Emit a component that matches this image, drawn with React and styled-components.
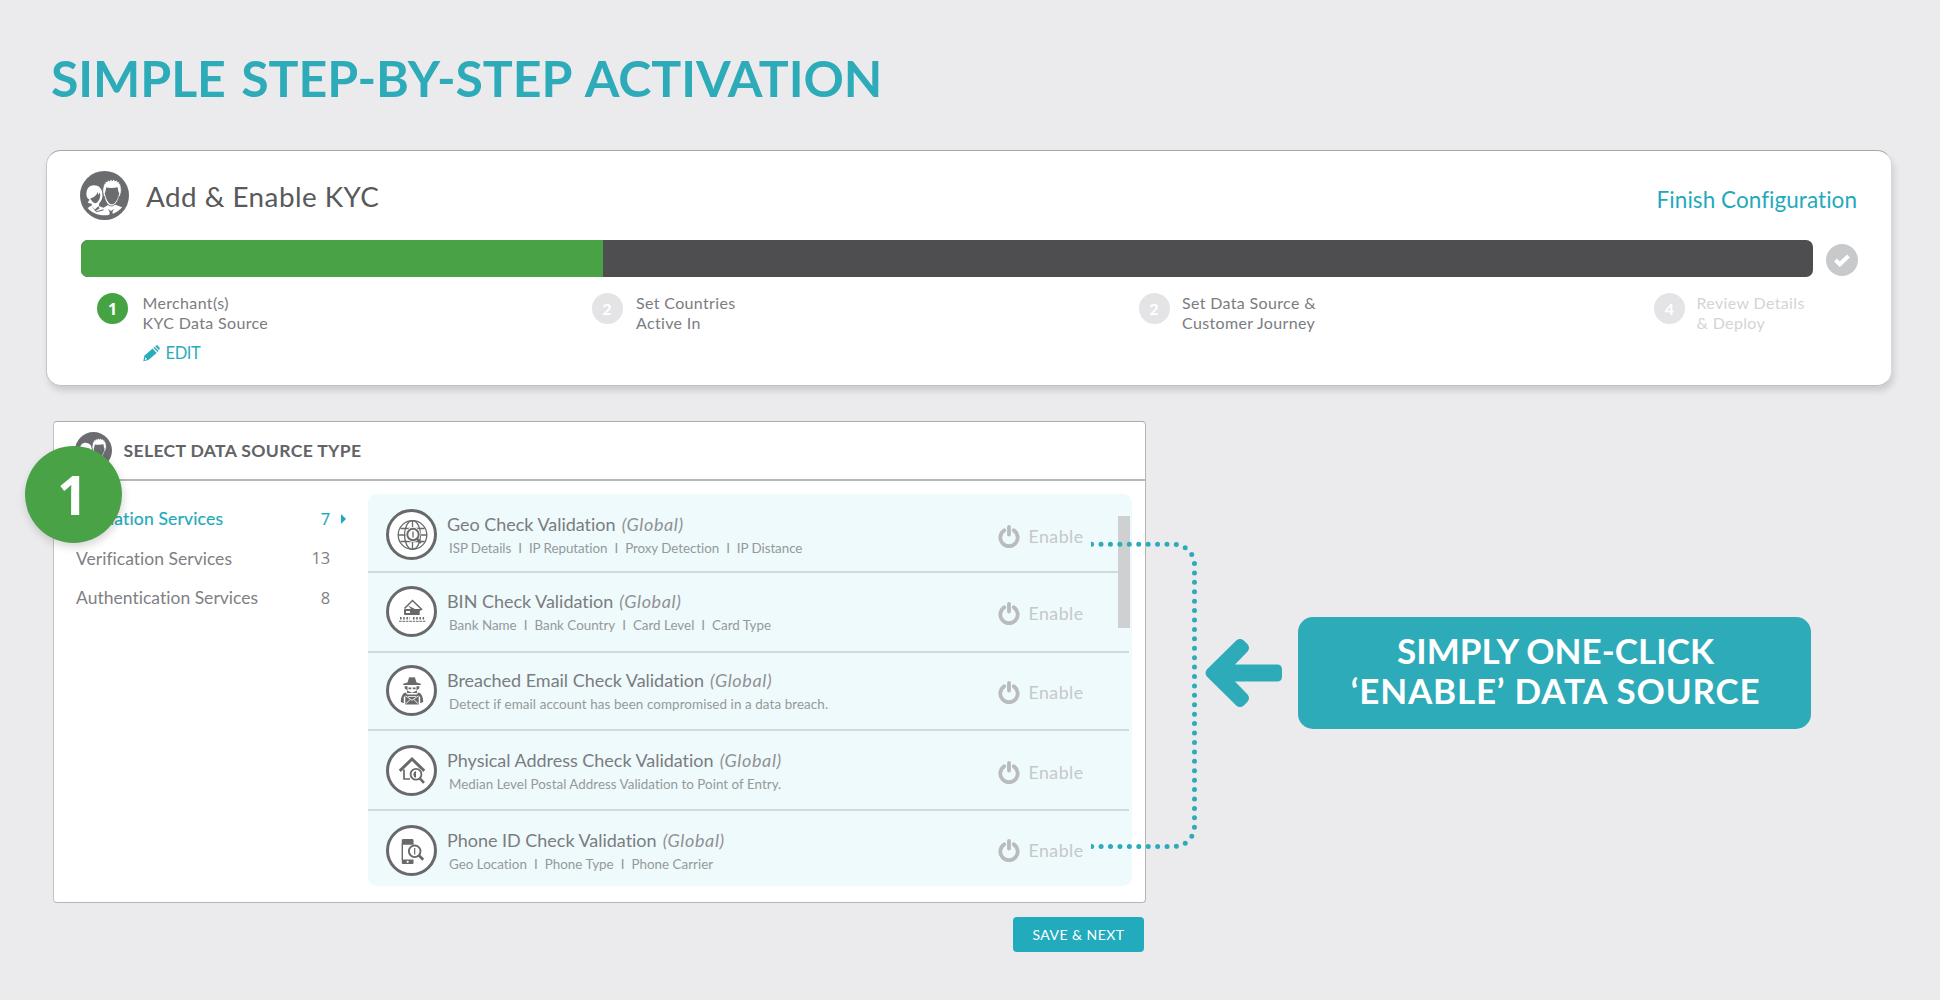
import React from "react";
import styled, { createGlobalStyle } from "styled-components";

const teal = "#2dabb9";
const green = "#49a246";
const iconGrey = "#68696b";

const GlobalStyle = createGlobalStyle`
  * { box-sizing: border-box; }
  body {
    margin: 0;
    background: #ebebed;
    font-family: Lato, "Liberation Sans", sans-serif;
    font-variant-ligatures: none;
  }
`;

const Page = styled.div`
  position: relative;
  width: 1940px;
  height: 1000px;
  padding: 48px 47px 0 46px;
  overflow: hidden;
`;

const Heading = styled.h1`
  margin: 0 0 42px 5px;
  font-size: 50px;
  line-height: 60px;
  font-weight: 700;
  letter-spacing: -0.08px;
  word-spacing: 3.5px;
  color: ${teal};
`;

/* ---------- progress card ---------- */

const ProgressCard = styled.section`
  width: 1846px;
  height: 236px;
  padding: 20px 33px 0;
  background: #fff;
  border: 1px solid;
  border-color: #a7a8aa #d8d8da #bfc0c2 #c6c6c8;
  border-radius: 15px;
  box-shadow: 2px 5px 6px rgba(0, 0, 0, 0.13);
`;

const ProgressHeader = styled.header`
  display: flex;
  align-items: center;
  height: 49px;
`;

const ProgressTitle = styled.h2`
  flex: 1;
  margin: 0 0 0 17px;
  padding-top: 3px;
  font-size: 27.8px;
  line-height: 34px;
  font-weight: 400;
  letter-spacing: 0.47px;
  color: #58595b;
`;

const FinishLink = styled.a`
  padding: 9px 1px 0 0;
  font-size: 22.5px;
  line-height: 28px;
  letter-spacing: 0.05px;
  color: #1faabb;
`;

const BarRow = styled.div`
  display: flex;
  align-items: center;
  gap: 13px;
  margin: 20px 0 0 0.5px;
`;

const Bar = styled.div`
  display: flex;
  width: 1734px;
  height: 37px;
  border-radius: 7px;
  overflow: hidden;
  background: #4e4e50;
`;

const BarFill = styled.div`
  width: 522px;
  background: ${green};
`;

const CheckCircle = styled.span`
  display: grid;
  place-items: center;
  width: 32px;
  height: 32px;
  margin-top: 2px;
  border-radius: 50%;
  background: #c8c9cb;
`;

const Steps = styled.div`
  display: grid;
  grid-template-columns: 494.5px 547px 515.5px auto;
  padding: 16px 0 0 17px;
`;

const Step = styled.div`
  display: flex;
  align-items: flex-start;
  gap: ${(p) => p.$gap}px;
  color: ${(p) => (p.$muted ? "#d3d4d6" : "#7b7c7f")};
`;

const StepNumber = styled.span`
  width: 31px;
  height: 31px;
  border-radius: 50%;
  text-align: center;
  font: 700 16px/32px ${(p) => (p.$active ? '"Open Sans"' : "Lato")}, sans-serif;
  color: #fff;
  background: ${(p) => (p.$active ? "#45a344" : "#e4e4e7")};
`;

const StepText = styled.div`
  font-size: 16px;
  line-height: 20px;
  letter-spacing: 0.35px;
  white-space: pre-line;
`;

const EditLink = styled.a`
  display: flex;
  align-items: center;
  gap: 6px;
  margin-top: 10px;
  font-size: 16.5px;
  letter-spacing: -0.4px;
  color: #2aabba;
`;

/* ---------- data source card ---------- */

const Main = styled.main`
  display: flex;
  align-items: flex-start;
  margin: 35px 0 0 7px;
`;

const Column = styled.div`
  display: flex;
  flex-direction: column;
  align-items: flex-end;
`;

const SourceCard = styled.section`
  width: 1093px;
  height: 482px;
  background: #fff;
  border: 1px solid;
  border-color: #a9aaac #b4b4b6 #b4b4b6 #c2c2c4;
  border-radius: 4px;
`;

const SourceHeader = styled.header`
  display: flex;
  align-items: center;
  gap: 12px;
  height: 59px;
  padding: 0 0 1px 20.5px;
  border-bottom: 2px solid #b6b7ba;
`;

const SourceTitle = styled.h3`
  margin: 1px 0 0;
  font-size: 17.6px;
  line-height: 22px;
  font-weight: 700;
  letter-spacing: 0.33px;
  color: #626366;
`;

const SourceBody = styled.div`
  display: flex;
  padding: 13px 13px 0 0;
`;

const Sidebar = styled.nav`
  width: 314px;
  padding: 5px 22px 0 22px;
`;

const SideItem = styled.div`
  display: grid;
  grid-template-columns: 1fr auto 16px;
  align-items: center;
  height: 39.5px;
  font-size: 17.5px;
  letter-spacing: ${(p) => (p.$active ? 0.17 : 0.02)}px;
  color: ${(p) => (p.$active ? "#1faabb" : "#7f8083")};
  -webkit-text-stroke: ${(p) => (p.$active ? "0.2px #1faabb" : "0")};
`;

const Count = styled.span`
  font: 400 16.5px/24px "Open Sans", sans-serif;
  letter-spacing: -0.2px;
`;

const Caret = styled.i`
  justify-self: end;
  border-left: 5.5px solid #1faabb;
  border-top: 5px solid transparent;
  border-bottom: 5px solid transparent;
`;

const Panel = styled.div`
  position: relative;
  width: 764px;
  height: 392px;
  border-radius: 9px;
  background: #effafc;
`;

const ScrollThumb = styled.div`
  position: absolute;
  top: 22px;
  right: 2px;
  width: 12px;
  height: 112px;
  background: #cfd0d2;
`;

const SourceRow = styled.article`
  display: flex;
  align-items: flex-start;
  width: 761px;
  height: ${(p) => p.$height}px;
  padding: ${(p) => p.$top}px 0 0 18px;
  border-bottom: ${(p) => (p.$last ? 0 : 2)}px solid #d2dadd;
`;

const IconRing = styled.span`
  display: grid;
  place-items: center;
  width: 51px;
  height: 51px;
  border: 3px solid ${iconGrey};
  border-radius: 50%;
  background: #fff;
`;

const RowText = styled.div`
  flex: 1;
  padding: 4px 0 0 10px;
`;

const RowTitle = styled.h4`
  margin: 0;
  font-size: 18px;
  line-height: 22px;
  font-weight: 400;
  letter-spacing: -0.02px;
  color: #7b7c7f;
`;

const Scope = styled.em`
  margin-left: 1.5px;
  letter-spacing: 0.62px;
  color: #909194;
`;

const Details = styled.div`
  display: flex;
  gap: 7px;
  margin: 5px 0 0 2px;
  font-size: 13.4px;
  line-height: 16px;
  letter-spacing: ${(p) => p.$track}px;
  color: #94999b;
`;

const EnableButton = styled.a`
  display: flex;
  align-items: center;
  gap: 8.5px;
  width: 131px;
  padding-top: 15px;
  margin-top: ${(p) => p.$lift}px;
  font-size: 17.8px;
  line-height: 24px;
  letter-spacing: 0.45px;
  color: #c5c8ca;
`;

const SaveButton = styled.button`
  width: 131px;
  height: 35px;
  margin: 14px 2px 0 0;
  padding: 1px 0 0;
  border: 0;
  border-radius: 4px;
  font: 400 14px/20px Lato, sans-serif;
  letter-spacing: 0.48px;
  color: #fff;
  background: #22aabd;
`;

/* ---------- annotations ---------- */

const ArrowSlot = styled.div`
  margin: 217px 16px 0 59px;
  height: 70px;
`;

const Callout = styled.aside`
  width: 513px;
  height: 112px;
  margin-top: 196px;
  padding: 13px 0 0 2px;
  border-radius: 15px;
  text-align: center;
  font-size: 35px;
  line-height: 40px;
  font-weight: 700;
  color: #fff;
  background: ${teal};
`;

const CalloutLine = styled.div`
  letter-spacing: ${(p) => p.$track}px;
`;

const StepBadge = styled.div`
  position: absolute;
  left: 25px;
  top: 446px;
  width: 97px;
  height: 97px;
  padding-right: 2px;
  border-radius: 50%;
  text-align: center;
  font: 700 53px/98px "Open Sans", sans-serif;
  color: #fff;
  background: ${green};
  box-shadow: 1px 4px 8px rgba(0, 0, 0, 0.16);
`;

const Connector = styled.svg`
  position: absolute;
  left: 1091px;
  top: 538px;
`;

/* ---------- drawings ---------- */

const PeopleIcon = ({ size }) => (
  <svg width={size} height={size} viewBox="0 0 49 49">
    <circle cx="24.5" cy="24.5" r="24.5" fill="#6b6c6f" />
    <g fill="#6b6c6f">
      <path fill="#fff" d="M6.400 23C6.400 17.500 9.500 14.200 14 14.200c4.600 0 7.500 2.800 8.300 7.300l.2 3.500c-.3 3-1.200 5-3.200 7.200l-.5 2.800 4.700 1.700 5-3h7l5.800 2.300 1-.3C38.500 41 31.800 44.300 24.500 44.300 17.500 44.300 11 41.500 7.600 37l4-2.500.5-1.500-4.300-1.300 1.700-3.200C7 27.500 6.400 25.500 6.400 23z" />
      <path d="M10.200 27.500c4-.8 6.500-3.500 7.700-6.700l.2 3.300 1.500-2.500c1.400 2.500.6 6.300-1.600 8.800-.9 1-2 1.900-3.200 1.700-1.200-.2-2.300-1.200-3-2.400-.5-.7-1.300-1.300-1.600-2.200z" />
      <path d="M10.800 34l4 4.500 3.600-3.300 1.300 2-4.300 3zM15.500 40.500l7.800-2.200.5 1-7.600 2zM28 38l2.900 2 3-2-1.500 3 .5 3h-3.600l.4-3z" />
      <path fill="#fff" stroke="#6b6c6f" strokeWidth=".9" d="M23.300 23.500c-1.200-3-.5-5.500 0-8 .3-1.500.8-2.600 1.800-3.200l.3-2.300 1.700.8.8-2 1.600 1.200 1.200-1.800 1.500 1.500 1.600-1.500 1.200 1.800 1.600-1.200.8 2 1.700-.6.2 2.300c1.300 1 1.700 2.400 1.800 4 .4 2.500.5 4.500-.5 7-.3 1.200-.8 1.800-1.400 2-1.200 5.200-4.600 9.500-7.800 9.500s-6.300-4.300-7.100-9.500c-.5-.3-.8-1-1-2z" />
      <path d="M24.700 22.500l.8-2.300.6-3.700c3.500.6 8 .6 11.600-.2l.6 3.900 1 2.300-1 3c-1.200 4.200-3.800 7.800-6.400 7.800-2.600 0-5.200-3.600-6.300-7.800z" />
    </g>
  </svg>
);

const CheckIcon = () => (
  <svg width="18" height="14" viewBox="0 0 18 14">
    <path d="M2.500 7l4.300 4.300L15.500 3" fill="none" stroke="#fff" strokeWidth="4" />
  </svg>
);

const PencilIcon = () => (
  <svg width="17" height="17" viewBox="0 0 17 17">
    <path fill="#2aabba" d="M.3 16.300l1-5.500L9.600 3.600l4 4.300-8.200 7.200zM10.500 2.800l1.100-1 4 4.300-1.100 1zM12.300 1.200L13 .6c.6-.5 1.300-.4 1.800.1l1.600 1.800c.5.6.5 1.300 0 1.900l-.5.7z" />
    <path d="M2.300 12.300l1.800 2-2.300.7z" fill="#fff" />
  </svg>
);

const PowerIcon = () => (
  <svg width="22" height="23" viewBox="0 0 22 23">
    <path d="M6.200 5.300a8.700 8.700 0 1 0 9.600 0" fill="none" stroke="#b9bbbd" strokeWidth="3.800" strokeLinecap="round" />
    <path d="M11 2v7.600" stroke="#b9bbbd" strokeWidth="3.800" strokeLinecap="round" />
  </svg>
);

const Glyph = ({ children }) => (
  <svg width="32" height="32" viewBox="0 0 32 32" fill="none" stroke={iconGrey}>
    {children}
  </svg>
);

const GlobeSearch = () => (
  <Glyph>
    <g strokeWidth="1.300">
      <circle cx="16.500" cy="16" r="14.300" />
      <ellipse cx="16.500" cy="16" rx="8" ry="14.300" />
      <path d="M16.500 1.700v28.600M2.200 16h28.600M4.500 9.500h24M4.500 22.500h24" />
    </g>
    <circle cx="17" cy="15.500" r="7.500" fill="#fff" stroke="none" />
    <circle cx="17" cy="15.500" r="5.700" strokeWidth="1.900" />
    <path d="M17 12.500v6" strokeWidth="1.300" />
    <path d="M21 19.800l4 4" strokeWidth="2.600" />
  </Glyph>
);

const CardDigits = () => (
  <Glyph>
    <path d="M8.500 12.500L16.500 4.500l9 8.800-2.700 1.200" strokeWidth="1.500" />
    <path d="M12 9.500l3 3.500h4z" fill={iconGrey} stroke="none" />
    <path d="M9.500 13h14.200v6H9.500c-1 0-1.500-.4-1.500-1.200v-3.600c0-.8.500-1.200 1.500-1.200z" fill={iconGrey} stroke="none" />
    <path d="M10 15h4v2h-4z" fill="#fff" stroke="none" />
    <path d="M4 22.200h10M17 22.200h12" strokeWidth="2.400" strokeDasharray="1.500 1.700" />
    <path d="M3 25.300h27" strokeWidth="1" strokeDasharray="2.600 .8" />
  </Glyph>
);

const ThiefMail = () => (
  <Glyph>
    <g fill={iconGrey} stroke="none">
      <path d="M11.500 7.500l1.500-4.700c.5-.8 1.300-.5 3-.2 1.700-.3 2.500-.6 3 .2l1.500 4.700 4.300 1.300v1.200H7.200V8.800z" />
      <path d="M8.500 11.200h3v4.300l-2.700-2zM23.500 11.200h-3v4.300l2.700-2z" />
      <path d="M12.500 12.500h2.800v1.700h-2.800zM16.800 12.500h2.800v1.700h-2.800zM11 15.500l5 2.300 5-2.300v2.500H11z" />
      <path d="M9.500 17.500c-3 .8-4.700 4.500-4.700 9.500l3 1.300v-6.300l3.500-2.700zM22.500 17.500c3 .8 4.700 4.500 4.700 9.500l-3 1.300v-6.300l-3.500-2.700z" />
      <path d="M9.300 19.500h13.400v10H9.300z" />
    </g>
    <path d="M9.800 21l6.200 4.300 6.200-4.300M10 28.500l4.200-4M22 28.500l-4.200-4" stroke="#fff" strokeWidth=".9" />
    <path d="M12 21.500h8" stroke="#fff" strokeWidth=".8" />
  </Glyph>
);

const HouseSearch = () => (
  <Glyph>
    <path d="M3.800 15.800L16 4l12.200 11.800" strokeWidth="3" />
    <path d="M8 14.500v9.500h6M24 13v2" strokeWidth="1.700" />
    <circle cx="20" cy="19.500" r="7" fill="#fff" stroke="none" />
    <circle cx="20" cy="19.300" r="5.400" strokeWidth="1.800" />
    <path d="M20 16a3.500 3.500 0 0 0 0 6.800z" fill={iconGrey} stroke="none" />
    <path d="M23.800 23.300l4.200 4.500" strokeWidth="2.600" />
  </Glyph>
);

const PhoneSearch = () => (
  <Glyph>
    <path d="M17.500 9H6.300V25" strokeWidth="1.400" />
    <path d="M5.800 5.500c0-1 .5-1.500 1.300-1.500h9c.9 0 1.400.5 1.400 1.500V9H5.800zM5.800 24.500h11.700v3c0 1-.5 1.500-1.400 1.500h-9c-.8 0-1.300-.5-1.300-1.500z" fill={iconGrey} stroke="none" />
    <circle cx="11.700" cy="26.800" r="1.100" fill="#fff" stroke="none" />
    <circle cx="18.700" cy="16.300" r="5.800" fill="#fff" strokeWidth="1.900" />
    <path d="M18.700 13v6.500" strokeWidth="1.200" />
    <path d="M22.800 20.300l4.400 4.400" strokeWidth="2.700" />
  </Glyph>
);

const ArrowLeft = () => (
  <svg width="77" height="70" viewBox="0 0 77 70" fill={teal}>
    <path d="M1.800 31.600L31.500 2.200Q35 -.4 38.500 2.200L42.600 6.300Q45.400 10 42.600 13.600L30 26.500H72Q77 26.500 77 31.500V38.500Q77 43.500 72 43.500H30L42.600 56.400Q45.400 60 42.600 63.700L38.500 67.800Q35 70.400 31.500 67.800L1.800 38.400Q-.8 35 1.800 31.600z" />
  </svg>
);

/* ---------- data ---------- */

const steps = [
  { n: 1, text: "Merchant(s)\nKYC Data Source", gap: 14.5, active: true, edit: true },
  { n: 2, text: "Set Countries\nActive In", gap: 13.5 },
  { n: 2, text: "Set Data Source &\nCustomer Journey", gap: 12.5 },
  { n: 4, text: "Review Details\n& Deploy", gap: 11.5, muted: true },
];

const services = [
  { label: "Validation Services", count: 7, active: true },
  { label: "Verification Services", count: 13 },
  { label: "Authentication Services", count: 8 },
];

const sources = [
  { Icon: GlobeSearch, title: "Geo Check Validation", details: ["ISP Details", "IP Reputation", "Proxy Detection", "IP Distance"], height: 79, top: 15, lift: 0, track: -0.06 },
  { Icon: CardDigits, title: "BIN Check Validation", details: ["Bank Name", "Bank Country", "Card Level", "Card Type"], height: 80, top: 13, lift: 0, track: 0 },
  { Icon: ThiefMail, title: "Breached Email Check Validation", details: ["Detect if email account has been compromised in a data breach."], height: 78, top: 12, lift: 0, track: 0.09 },
  { Icon: HouseSearch, title: "Physical Address Check Validation", details: ["Median Level Postal Address Validation to Point of Entry."], height: 80, top: 14, lift: 0, track: 0.02 },
  { Icon: PhoneSearch, title: "Phone ID Check Validation", details: ["Geo Location", "Phone Type", "Phone Carrier"], height: 75, top: 14, lift: -2, track: 0.01, last: true },
];

const App = () => (
  <Page>
    <GlobalStyle />
    <Heading>SIMPLE STEP-BY-STEP ACTIVATION</Heading>

    <ProgressCard>
      <ProgressHeader>
        <PeopleIcon size={49} />
        <ProgressTitle>Add &amp; Enable KYC</ProgressTitle>
        <FinishLink>Finish Configuration</FinishLink>
      </ProgressHeader>
      <BarRow>
        <Bar>
          <BarFill />
        </Bar>
        <CheckCircle>
          <CheckIcon />
        </CheckCircle>
      </BarRow>
      <Steps>
        {steps.map((s, i) => (
          <Step key={i} $gap={s.gap} $muted={s.muted}>
            <StepNumber $active={s.active}>{s.n}</StepNumber>
            <div>
              <StepText>{s.text}</StepText>
              {s.edit && (
                <EditLink>
                  <PencilIcon />
                  EDIT
                </EditLink>
              )}
            </div>
          </Step>
        ))}
      </Steps>
    </ProgressCard>

    <Main>
      <Column>
        <SourceCard>
          <SourceHeader>
            <PeopleIcon size={37} />
            <SourceTitle>SELECT DATA SOURCE TYPE</SourceTitle>
          </SourceHeader>
          <SourceBody>
            <Sidebar>
              {services.map((s) => (
                <SideItem key={s.label} $active={s.active}>
                  <span>{s.label}</span>
                  <Count>{s.count}</Count>
                  {s.active && <Caret />}
                </SideItem>
              ))}
            </Sidebar>
            <Panel>
              {sources.map(({ Icon, ...s }) => (
                <SourceRow key={s.title} $height={s.height} $top={s.top} $last={s.last}>
                  <IconRing>
                    <Icon />
                  </IconRing>
                  <RowText>
                    <RowTitle>
                      {s.title} <Scope>(Global)</Scope>
                    </RowTitle>
                    <Details $track={s.track}>
                      {s.details.map((d, i) => (
                        <React.Fragment key={d}>
                          {i > 0 && <span>I</span>}
                          <span>{d}</span>
                        </React.Fragment>
                      ))}
                    </Details>
                  </RowText>
                  <EnableButton $lift={s.lift}>
                    <PowerIcon />
                    Enable
                  </EnableButton>
                </SourceRow>
              ))}
              <ScrollThumb />
            </Panel>
          </SourceBody>
        </SourceCard>
        <SaveButton>SAVE &amp; NEXT</SaveButton>
      </Column>

      <ArrowSlot>
        <ArrowLeft />
      </ArrowSlot>
      <Callout>
        <CalloutLine $track={0.04}>SIMPLY ONE-CLICK</CalloutLine>
        <CalloutLine $track={0.82}>‘ENABLE’ DATA SOURCE</CalloutLine>
      </Callout>
    </Main>

    <StepBadge>1</StepBadge>
    <Connector width="108" height="316" viewBox="0 0 108 316">
      <path
        d="M.6 6.300H83a20.500 20.500 0 0 1 20.500 20.500V288a20.500 20.500 0 0 1-20.500 20.500H.4"
        pathLength="52.03"
        fill="none"
        stroke={teal}
        strokeWidth="5"
        strokeLinecap="round"
        strokeDasharray="0 1"
      />
    </Connector>
  </Page>
);

export default App;
